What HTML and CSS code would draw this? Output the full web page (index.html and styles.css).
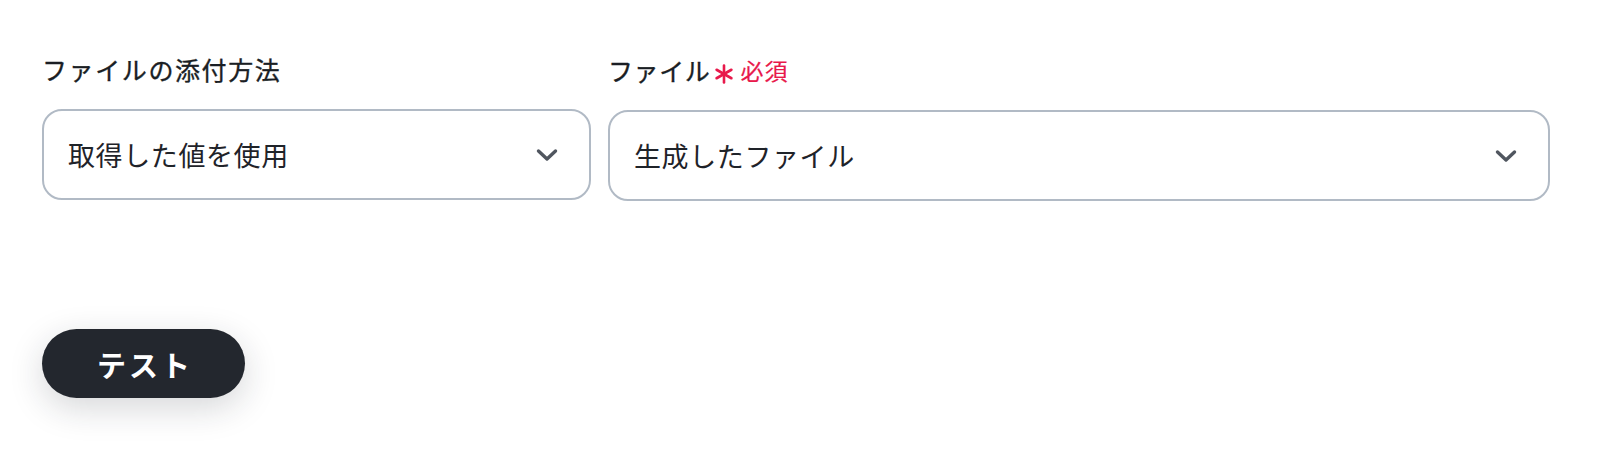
FILE: index.html
```html
<!DOCTYPE html>
<html lang="ja">
<head>
<meta charset="utf-8">
<link rel="stylesheet" href="styles.css">
</head>
<body>
<div class="page">
  <div class="fields">
    <div class="field">
      <div class="label">ファイルの添付方法</div>
      <div class="select">
        <span class="value">取得した値を使用</span>
        <svg class="chev" width="22" height="14" viewBox="0 0 22 14"><path d="M2.5 3 L11 11 L19.5 3" fill="none" stroke="#50565f" stroke-width="3.4" stroke-linecap="round" stroke-linejoin="round"/></svg>
      </div>
    </div>
    <div class="field">
      <div class="label label-req">ファイル<span class="req"><svg class="ast" width="20" height="20" viewBox="0 0 20 20"><g stroke="#e8194b" stroke-width="2.6" stroke-linecap="round"><path d="M10 1.5 V18.5"/><path d="M2.6 5.75 L17.4 14.25"/><path d="M2.6 14.25 L17.4 5.75"/></g></svg>必須</span></div>
      <div class="select">
        <span class="value">生成したファイル</span>
        <svg class="chev" width="22" height="14" viewBox="0 0 22 14"><path d="M2.5 3 L11 11 L19.5 3" fill="none" stroke="#50565f" stroke-width="3.4" stroke-linecap="round" stroke-linejoin="round"/></svg>
      </div>
    </div>
  </div>
  <div class="actions">
    <button class="btn">テスト</button>
  </div>
</div>
</body>
</html>
```

FILE: styles.css
```css
* { box-sizing: border-box; }
html, body { margin: 0; padding: 0; background: #ffffff; }
body {
  font-family: "Noto Sans CJK JP", "Noto Sans", sans-serif;
  color: #1f2329;
  min-height: 458px;
}
.page {
  padding: 50px 50px 60px 42px;
}
.fields {
  display: grid;
  grid-template-columns: 549px 1fr;
  column-gap: 17px;
  align-items: start;
}
.field {
  display: flex;
  flex-direction: column;
}
.label {
  font-size: 25px;
  font-weight: 400;
  line-height: 38px;
  letter-spacing: 1.6px;
  margin-bottom: 21px;
  display: flex;
  align-items: center;
  color: #1a1e24;
  -webkit-text-stroke: 0.35px #1a1e24;
}
.label-req { line-height: 40px; margin-bottom: 20px; letter-spacing: 0.6px; }
.req {
  color: #e8194b;
  font-size: 23px;
  font-weight: 400;
  margin-left: 4px;
  display: inline-flex;
  align-items: center;
  letter-spacing: 1px;
  -webkit-text-stroke: 0.2px #e8194b;
}
.ast {
  display: block;
  margin-right: 6px;
  position: relative;
  top: 4px;
}
.select {
  height: 91px;
  border: 2px solid #b1bac5;
  border-radius: 20px;
  display: flex;
  align-items: center;
  justify-content: space-between;
  padding: 0 31px 0 24px;
  background: #fff;
}
.value {
  font-size: 27px;
  letter-spacing: 0.6px;
  color: #1f2329;
}
.chev { display: block; }
.actions {
  margin-top: 128px;
}
.btn {
  width: 203px;
  height: 69px;
  border: none;
  border-radius: 35px;
  background: #23272e;
  color: #ffffff;
  font-family: "Noto Sans CJK JP", "Noto Sans", sans-serif;
  font-size: 29px;
  font-weight: 700;
  letter-spacing: 3px;
  padding: 0 0 0 3px;
  box-shadow: 0 10px 34px rgba(30, 35, 45, 0.18);
}
```
